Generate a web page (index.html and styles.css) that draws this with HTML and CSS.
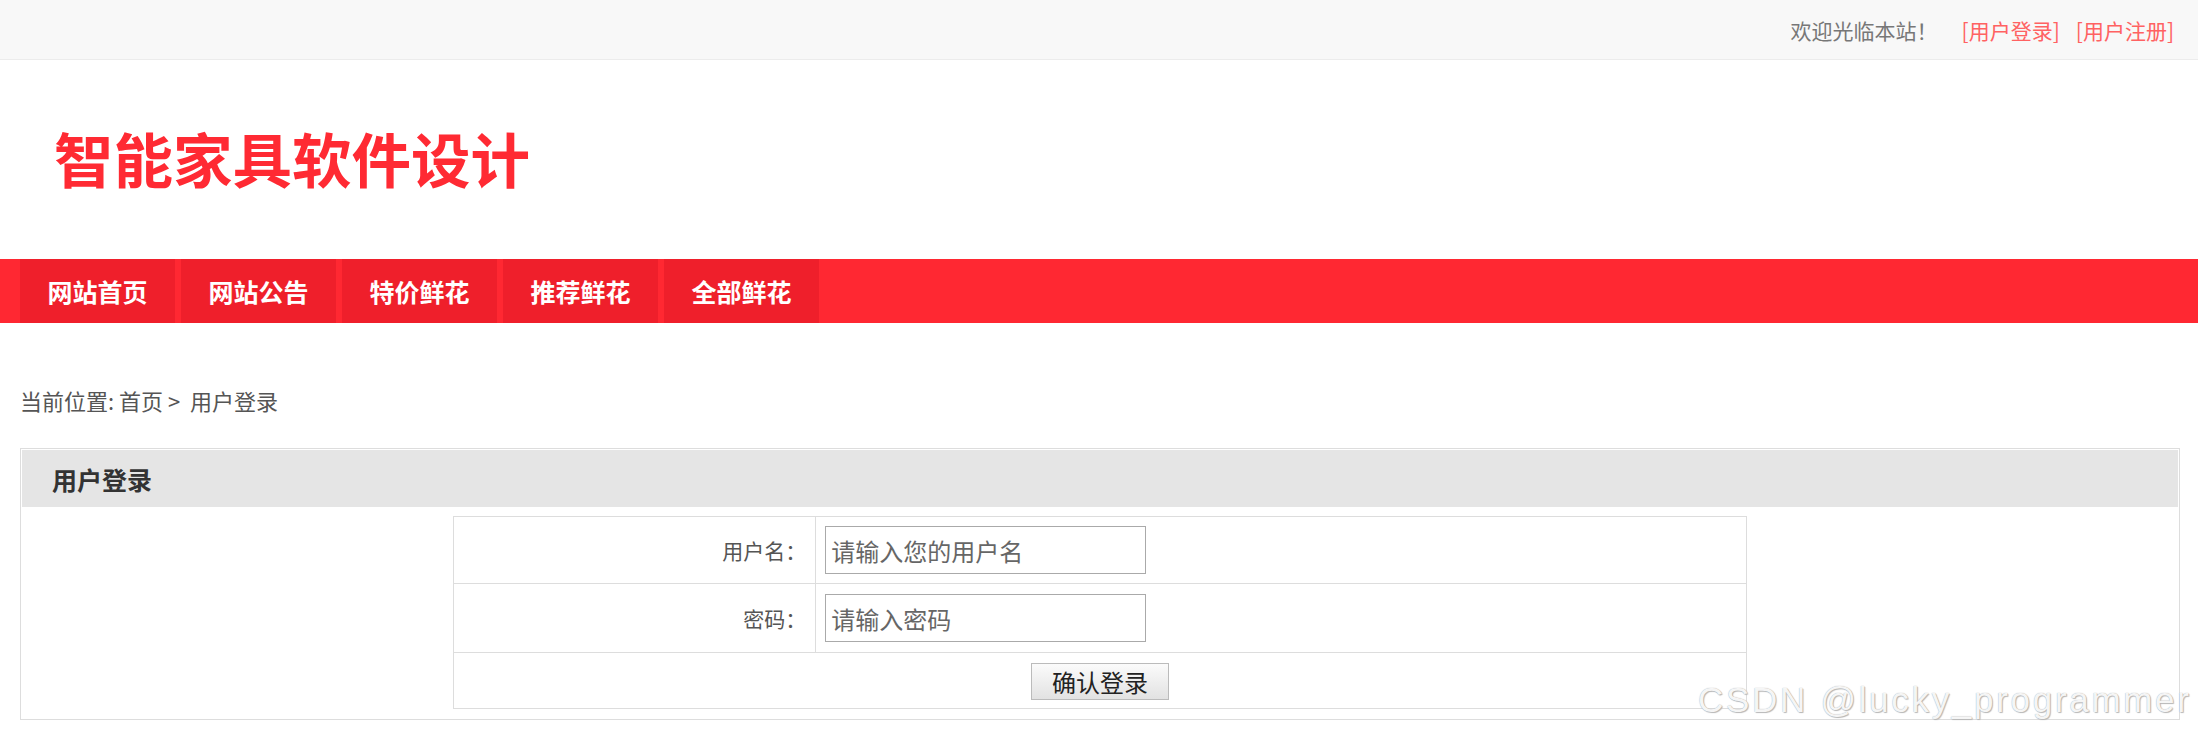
FILE: index.html
```html
<!DOCTYPE html>
<html lang="zh-CN">
<head>
<meta charset="utf-8">
<title>智能家具软件设计</title>
<link rel="stylesheet" href="styles.css">
</head>
<body>
<div class="topbar">
  <span class="welcome">欢迎光临本站！</span>
  <a class="toplink first" href="#">[用户登录]</a>
  <a class="toplink" href="#">[用户注册]</a>
</div>
<div class="header">
  <h1 class="logo">智能家具软件设计</h1>
</div>
<nav class="nav">
  <a class="nav-item" href="#">网站首页</a>
  <a class="nav-item" href="#">网站公告</a>
  <a class="nav-item" href="#">特价鲜花</a>
  <a class="nav-item" href="#">推荐鲜花</a>
  <a class="nav-item" href="#">全部鲜花</a>
</nav>
<div class="crumb">当前位置: 首页 &gt;&nbsp; 用户登录</div>
<div class="panel">
  <div class="panel-head">用户登录</div>
  <table class="form-table">
    <tr class="row-user">
      <td class="label">用户名：</td>
      <td class="field"><input class="inp" type="text" placeholder="请输入您的用户名"></td>
    </tr>
    <tr class="row-pass">
      <td class="label">密码：</td>
      <td class="field"><input class="inp" type="password" placeholder="请输入密码"></td>
    </tr>
    <tr class="row-btn">
      <td class="btn-cell" colspan="2"><button class="btn" type="button">确认登录</button></td>
    </tr>
  </table>
</div>
<div class="watermark">CSDN @lucky_programmer</div>
</body>
</html>
```
FILE: styles.css
```css
html, body {
  margin: 0;
  padding: 0;
  background: #fff;
}
body {
  font-family: "Noto Sans CJK SC", "Noto Sans", sans-serif;
  color: #555;
  position: relative;
  min-height: 740px;
}
a { text-decoration: none; }

.topbar {
  height: 60px;
  box-sizing: border-box;
  background: #f8f8f8;
  border-bottom: 1px solid #ececec;
  display: flex;
  justify-content: flex-end;
  align-items: center;
  padding-right: 24px;
  font-size: 21px;
}
.welcome { color: #777; margin-right: 24px; }
.toplink { color: #ff6262; }
.toplink.first { margin-right: 16px; }

.header {
  height: 199px;
  display: flex;
  align-items: center;
  padding-left: 54px;
}
.logo {
  margin: 0;
  font-size: 59.5px;
  line-height: 1;
  font-weight: 700;
  color: #ff2a33;
  position: relative;
  top: -2px;
}

.nav {
  height: 64px;
  background: #ff2832;
  display: flex;
  gap: 6px;
  padding-left: 20px;
}
.nav-item {
  width: 155px;
  background: #ef1f2b;
  color: #fff;
  font-size: 25px;
  font-weight: 700;
  display: flex;
  align-items: center;
  justify-content: center;
}

.crumb {
  margin-top: 62px;
  padding-left: 20px;
  font-size: 22px;
  line-height: 30px;
  color: #555;
}

.panel {
  margin: 33px 18px 0 20px;
  border: 1px solid #ddd;
  padding: 1px 1px 10px;
}
.panel-head {
  height: 57px;
  background: #e5e5e5;
  color: #333;
  font-size: 25px;
  font-weight: 700;
  display: flex;
  align-items: center;
  padding-left: 30px;
}

.form-table {
  width: 60%;
  margin: 9px auto 0;
  border-collapse: collapse;
  font-size: 21px;
}
.form-table td {
  border: 1px solid #ddd;
  padding: 0;
}
.label {
  width: 362px;
  text-align: right;
  padding-right: 9px !important;
  color: #555;
  box-sizing: border-box;
}
.row-user td { height: 66px; }
.row-pass td { height: 68px; }
.row-btn td { height: 55px; }
.field { padding-left: 9px !important; }
.inp {
  width: 321px;
  height: 48px;
  box-sizing: border-box;
  border: 1px solid #aaa;
  padding: 0 5px;
  font-family: "Noto Sans CJK SC", sans-serif;
  font-size: 24px;
  color: #333;
  outline: none;
  display: block;
}
.inp::placeholder { color: #666; }
.btn-cell { text-align: center; }
.btn {
  width: 138px;
  height: 37px;
  border: 1px solid #bbb;
  background: linear-gradient(#fbfbfb, #e2e2e2);
  font-family: "Noto Sans CJK SC", sans-serif;
  font-size: 24px;
  color: #222;
  padding: 0;
  line-height: 35px;
  position: relative;
  top: 1px;
}

.watermark {
  position: absolute;
  left: 1698px;
  top: 675px;
  font-family: "Liberation Sans", Arial, sans-serif;
  font-size: 35px;
  letter-spacing: 2.7px;
  color: rgba(255, 255, 255, 0.92);
  text-shadow: 0 0 1px #999, 1px 1px 1px #bbb;
  white-space: nowrap;
  line-height: 50px;
}
```
